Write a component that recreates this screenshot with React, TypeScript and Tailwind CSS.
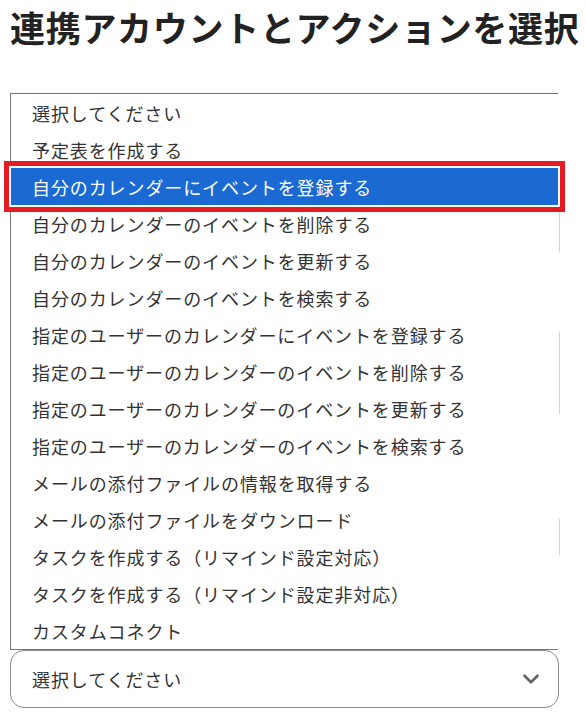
import React from "react";
import { ChevronDown } from "lucide-react";

const OPTIONS = [
  "選択してください",
  "予定表を作成する",
  "自分のカレンダーにイベントを登録する",
  "自分のカレンダーのイベントを削除する",
  "自分のカレンダーのイベントを更新する",
  "自分のカレンダーのイベントを検索する",
  "指定のユーザーのカレンダーにイベントを登録する",
  "指定のユーザーのカレンダーのイベントを削除する",
  "指定のユーザーのカレンダーのイベントを更新する",
  "指定のユーザーのカレンダーのイベントを検索する",
  "メールの添付ファイルの情報を取得する",
  "メールの添付ファイルをダウンロード",
  "タスクを作成する（リマインド設定対応）",
  "タスクを作成する（リマインド設定非対応）",
  "カスタムコネクト",
];

const SELECTED = 2;

export default function App() {
  return (
    <main className="w-[586px] h-[720px] bg-white overflow-hidden font-['Noto_Sans_CJK_JP','Noto_Sans',sans-serif]">
      <h1 className="mt-[9px] pl-[10px] text-[35px] leading-[35px] tracking-[0.7px] font-bold text-[#222] whitespace-nowrap">
        連携アカウントとアクションを選択
      </h1>

      {/* open dropdown list */}
      <div className="relative mt-[49px] ml-[10px] w-[548px] border-t border-l border-b border-[#767676]">
        <ul className="flex flex-col">
          {OPTIONS.map((label, i) => (
            <li
              key={label}
              className={
                i === SELECTED
                  ? "relative z-10 h-[37px] flex items-center pl-[21px] pt-[2px] bg-[#1b69d3] text-white text-[18px] tracking-[0.9px] whitespace-nowrap shadow-[0_0_0_2px_#fff,0_0_0_7px_#e51b24]"
                  : "h-[37px] flex items-center pl-[21px] pt-[2px] text-[#333] text-[18px] tracking-[0.9px] whitespace-nowrap"
              }
            >
              {label}
            </li>
          ))}
        </ul>
        {/* faint scroll track pieces on the right edge */}
        <span className="absolute right-[-2px] top-[118px] h-[40px] w-px bg-[#d4d4d8]" />
        <span className="absolute right-[-2px] top-[238px] h-[82px] w-px bg-[#d4d4d8]" />
        <span className="absolute right-[-2px] top-[425px] h-[36px] w-px bg-[#d4d4d8]" />
      </div>

      {/* closed select */}
      <div className="ml-[10px] w-[549px] h-[58px] rounded-[14px] border border-[#8a8a8a] flex items-center justify-between pl-[21px] pr-[14px]">
        <span className="text-[18px] tracking-[0.9px] text-[#333]">選択してください</span>
        <ChevronDown size={26} strokeWidth={2.5} className="text-[#666]" />
      </div>
    </main>
  );
}
